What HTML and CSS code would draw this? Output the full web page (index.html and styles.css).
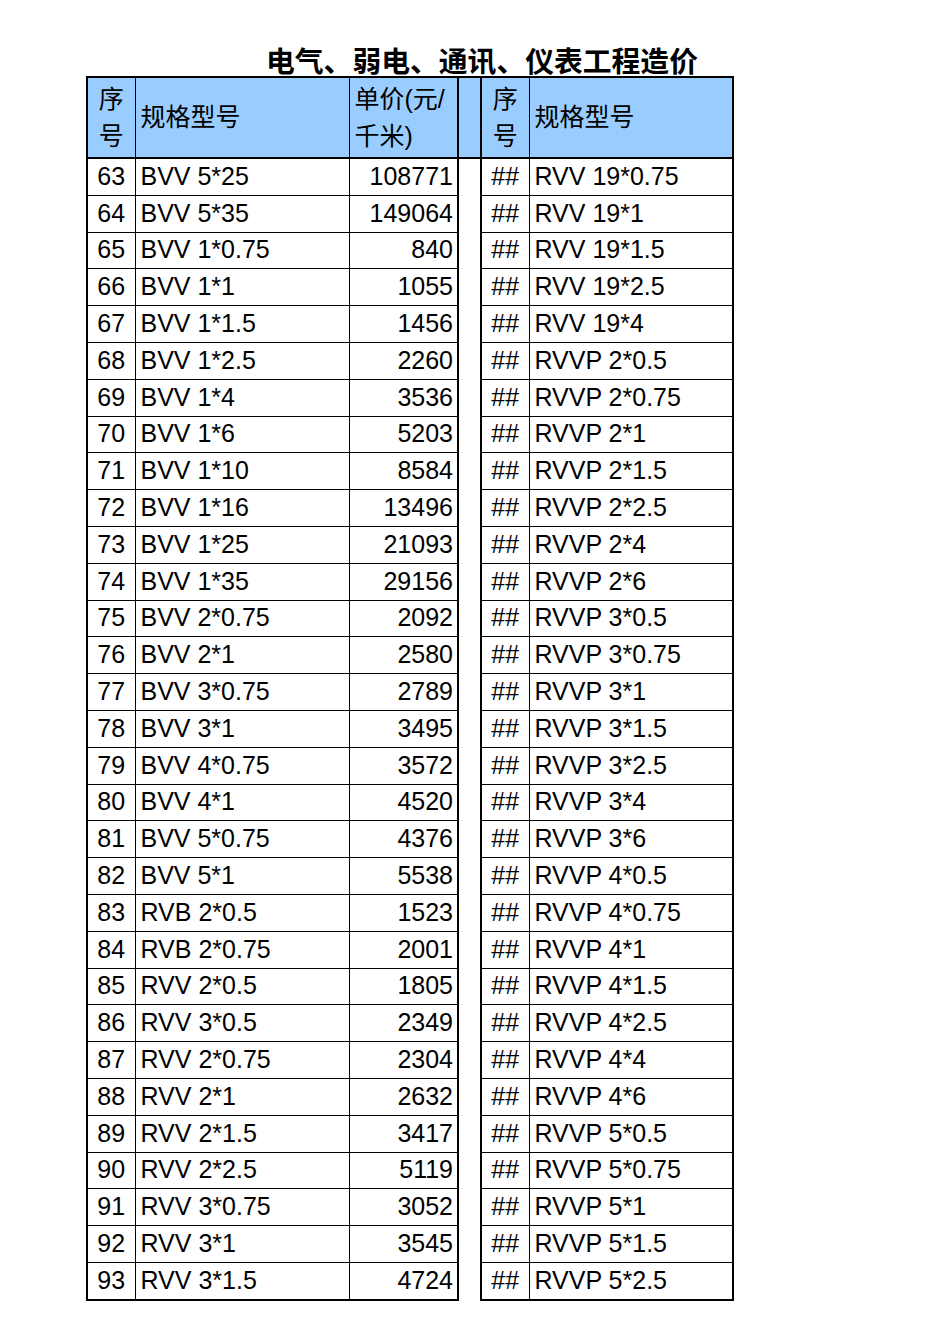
FILE: index.html
```html
<!DOCTYPE html>
<html lang="zh-CN">
<head>
<meta charset="utf-8">
<title>电气、弱电、通讯、仪表工程造价</title>
<link rel="stylesheet" href="styles.css">
</head>
<body>
<div class="title"><span>电气、弱电、通讯、仪表工程造价</span></div>
<table class="sheet">
<colgroup>
<col class="c-no"><col class="c-spec"><col class="c-price"><col class="c-gap"><col class="c-no2"><col class="c-spec2">
</colgroup>
<thead>
<tr>
<th class="no">序<br>号</th>
<th class="spec">规格型号</th>
<th class="head-price">单价(元/<br>千米)</th>
<th class="gap"></th>
<th class="no">序<br>号</th>
<th class="spec last">规格型号</th>
</tr>
</thead>
<tbody>
<tr><td class="no">63</td><td class="spec">BVV 5*25</td><td class="price">108771</td><td class="gap"></td><td class="no">##</td><td class="spec last">RVV 19*0.75</td></tr>
<tr><td class="no">64</td><td class="spec">BVV 5*35</td><td class="price">149064</td><td class="gap"></td><td class="no">##</td><td class="spec last">RVV 19*1</td></tr>
<tr><td class="no">65</td><td class="spec">BVV 1*0.75</td><td class="price">840</td><td class="gap"></td><td class="no">##</td><td class="spec last">RVV 19*1.5</td></tr>
<tr><td class="no">66</td><td class="spec">BVV 1*1</td><td class="price">1055</td><td class="gap"></td><td class="no">##</td><td class="spec last">RVV 19*2.5</td></tr>
<tr><td class="no">67</td><td class="spec">BVV 1*1.5</td><td class="price">1456</td><td class="gap"></td><td class="no">##</td><td class="spec last">RVV 19*4</td></tr>
<tr><td class="no">68</td><td class="spec">BVV 1*2.5</td><td class="price">2260</td><td class="gap"></td><td class="no">##</td><td class="spec last">RVVP 2*0.5</td></tr>
<tr><td class="no">69</td><td class="spec">BVV 1*4</td><td class="price">3536</td><td class="gap"></td><td class="no">##</td><td class="spec last">RVVP 2*0.75</td></tr>
<tr><td class="no">70</td><td class="spec">BVV 1*6</td><td class="price">5203</td><td class="gap"></td><td class="no">##</td><td class="spec last">RVVP 2*1</td></tr>
<tr><td class="no">71</td><td class="spec">BVV 1*10</td><td class="price">8584</td><td class="gap"></td><td class="no">##</td><td class="spec last">RVVP 2*1.5</td></tr>
<tr><td class="no">72</td><td class="spec">BVV 1*16</td><td class="price">13496</td><td class="gap"></td><td class="no">##</td><td class="spec last">RVVP 2*2.5</td></tr>
<tr><td class="no">73</td><td class="spec">BVV 1*25</td><td class="price">21093</td><td class="gap"></td><td class="no">##</td><td class="spec last">RVVP 2*4</td></tr>
<tr><td class="no">74</td><td class="spec">BVV 1*35</td><td class="price">29156</td><td class="gap"></td><td class="no">##</td><td class="spec last">RVVP 2*6</td></tr>
<tr><td class="no">75</td><td class="spec">BVV 2*0.75</td><td class="price">2092</td><td class="gap"></td><td class="no">##</td><td class="spec last">RVVP 3*0.5</td></tr>
<tr><td class="no">76</td><td class="spec">BVV 2*1</td><td class="price">2580</td><td class="gap"></td><td class="no">##</td><td class="spec last">RVVP 3*0.75</td></tr>
<tr><td class="no">77</td><td class="spec">BVV 3*0.75</td><td class="price">2789</td><td class="gap"></td><td class="no">##</td><td class="spec last">RVVP 3*1</td></tr>
<tr><td class="no">78</td><td class="spec">BVV 3*1</td><td class="price">3495</td><td class="gap"></td><td class="no">##</td><td class="spec last">RVVP 3*1.5</td></tr>
<tr><td class="no">79</td><td class="spec">BVV 4*0.75</td><td class="price">3572</td><td class="gap"></td><td class="no">##</td><td class="spec last">RVVP 3*2.5</td></tr>
<tr><td class="no">80</td><td class="spec">BVV 4*1</td><td class="price">4520</td><td class="gap"></td><td class="no">##</td><td class="spec last">RVVP 3*4</td></tr>
<tr><td class="no">81</td><td class="spec">BVV 5*0.75</td><td class="price">4376</td><td class="gap"></td><td class="no">##</td><td class="spec last">RVVP 3*6</td></tr>
<tr><td class="no">82</td><td class="spec">BVV 5*1</td><td class="price">5538</td><td class="gap"></td><td class="no">##</td><td class="spec last">RVVP 4*0.5</td></tr>
<tr><td class="no">83</td><td class="spec">RVB 2*0.5</td><td class="price">1523</td><td class="gap"></td><td class="no">##</td><td class="spec last">RVVP 4*0.75</td></tr>
<tr><td class="no">84</td><td class="spec">RVB 2*0.75</td><td class="price">2001</td><td class="gap"></td><td class="no">##</td><td class="spec last">RVVP 4*1</td></tr>
<tr><td class="no">85</td><td class="spec">RVV 2*0.5</td><td class="price">1805</td><td class="gap"></td><td class="no">##</td><td class="spec last">RVVP 4*1.5</td></tr>
<tr><td class="no">86</td><td class="spec">RVV 3*0.5</td><td class="price">2349</td><td class="gap"></td><td class="no">##</td><td class="spec last">RVVP 4*2.5</td></tr>
<tr><td class="no">87</td><td class="spec">RVV 2*0.75</td><td class="price">2304</td><td class="gap"></td><td class="no">##</td><td class="spec last">RVVP 4*4</td></tr>
<tr><td class="no">88</td><td class="spec">RVV 2*1</td><td class="price">2632</td><td class="gap"></td><td class="no">##</td><td class="spec last">RVVP 4*6</td></tr>
<tr><td class="no">89</td><td class="spec">RVV 2*1.5</td><td class="price">3417</td><td class="gap"></td><td class="no">##</td><td class="spec last">RVVP 5*0.5</td></tr>
<tr><td class="no">90</td><td class="spec">RVV 2*2.5</td><td class="price">5119</td><td class="gap"></td><td class="no">##</td><td class="spec last">RVVP 5*0.75</td></tr>
<tr><td class="no">91</td><td class="spec">RVV 3*0.75</td><td class="price">3052</td><td class="gap"></td><td class="no">##</td><td class="spec last">RVVP 5*1</td></tr>
<tr><td class="no">92</td><td class="spec">RVV 3*1</td><td class="price">3545</td><td class="gap"></td><td class="no">##</td><td class="spec last">RVVP 5*1.5</td></tr>
<tr><td class="no">93</td><td class="spec">RVV 3*1.5</td><td class="price">4724</td><td class="gap"></td><td class="no">##</td><td class="spec last">RVVP 5*2.5</td></tr>
</tbody>
</table>
</body>
</html>
```

FILE: styles.css
```css
html, body {
  margin: 0;
  padding: 0;
  background: #ffffff;
}

body {
  font-family: "Liberation Sans", "Noto Sans CJK SC", Arial, sans-serif;
  color: #000000;
}

.title {
  height: 76px;
  padding-left: 266px;
  display: flex;
  align-items: flex-end;
}

.title span {
  font-family: "Noto Sans CJK SC", sans-serif;
  font-weight: 700;
  font-size: 28.8px;
  line-height: 30px;
  margin-bottom: 1px;
  white-space: nowrap;
}

.sheet {
  margin-left: 86px;
  border-collapse: collapse;
  table-layout: fixed;
  width: 646px;
  font-size: 25px;
}

.c-no { width: 48px; }
.c-spec { width: 214px; }
.c-price { width: 109px; }
.c-gap { width: 23px; }
.c-no2 { width: 48px; }
.c-spec2 { width: 204px; }

.sheet th,
.sheet td {
  border: 1px solid #000000;
  padding: 0 4px 0 5px;
  white-space: nowrap;
  overflow: hidden;
  font-weight: 400;
}

.sheet th {
  background: #99ccff;
  height: 79px;
  line-height: 37px;
  border-top: 2px solid #000000;
  border-bottom: 2px solid #000000;
  text-align: left;
  vertical-align: middle;
}

.sheet td {
  height: 33.8px;
  line-height: 30px;
  vertical-align: middle;
  padding-bottom: 2px;
}

.sheet .no {
  text-align: center;
  padding-left: 0;
  padding-right: 0;
  border-left-width: 2px;
}

.sheet .price {
  text-align: right;
}

.sheet .head-price {
  text-align: left;
}

.sheet .gap {
  border-left: 2px solid #000000;
  border-right: 2px solid #000000;
  padding: 0;
}

.sheet td.gap {
  border-top: none;
  border-bottom: none;
}

.sheet .last {
  border-right: 2px solid #000000;
}

.sheet tbody tr:last-child td {
  border-bottom: 2px solid #000000;
}

.sheet tbody tr:last-child td.gap {
  border-bottom: none;
}
```
